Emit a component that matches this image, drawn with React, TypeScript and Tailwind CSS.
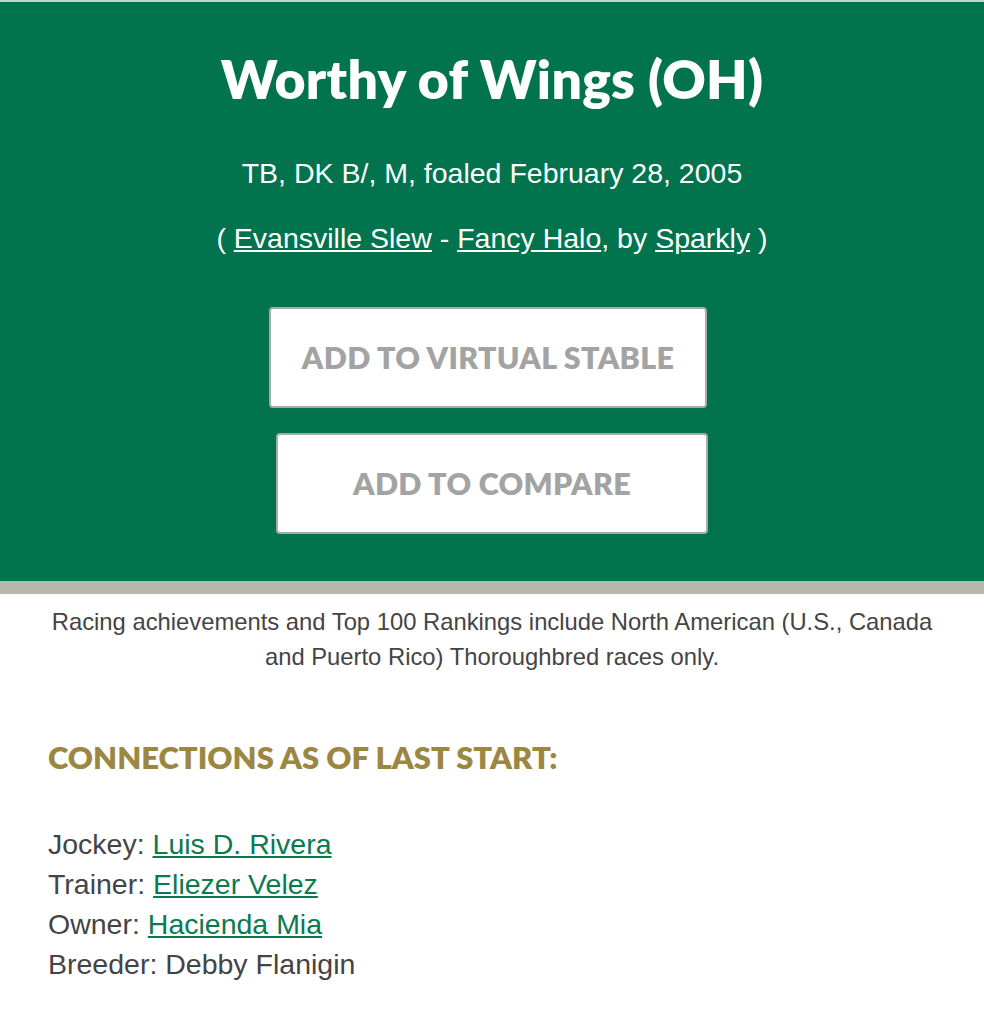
const heading = "font-['Lato','Open_Sans',sans-serif]"
const body = "font-['Liberation_Sans',Arial,sans-serif]"

const connections = [
    { label: 'Jockey:', name: 'Luis D. Rivera', link: true },
    { label: 'Trainer:', name: 'Eliezer Velez', link: true },
    { label: 'Owner:', name: 'Hacienda Mia', link: true },
    { label: 'Breeder:', name: 'Debby Flanigin', link: false },
]

export default function App() {
    return (
        <div className="w-[984px] min-h-[1024px] bg-white border-t-2 border-[#c9cfcb]">
            <section className="bg-[#01734d] text-white pt-[44px] pb-[47px] border-b-[13px] border-[#bab8ae]">
                <h1 className={`${heading} text-center text-[53.5px] leading-[64px] font-extrabold tracking-[0.3px]`}>
                    Worthy of Wings (OH)
                </h1>
                <div className={`${body} text-center text-[28.5px] leading-[32px] mt-[47px]`}>
                    TB, DK B/, M, foaled February 28, 2005
                </div>
                <div className={`${body} text-center text-[28.5px] leading-[32px] mt-[33px]`}>
                    ( <a className="underline">Evansville Slew</a> - <a className="underline">Fancy Halo</a>, by <a className="underline">Sparkly</a> )
                </div>
                <div className="flex flex-col items-start w-[440px] ml-[269px] mt-[53px] gap-[25px]">
                    <button className={`${heading} w-[438px] h-[101px] bg-white border-2 border-[#a9aba9] rounded-[4px] text-[#a3a3a3] text-[30.4px] font-extrabold tracking-[0.3px]`}>
                        ADD TO VIRTUAL STABLE
                    </button>
                    <button className={`${heading} ml-[7px] w-[432px] h-[101px] bg-white border-2 border-[#a9aba9] rounded-[4px] text-[#a3a3a3] text-[30.4px] font-extrabold tracking-[0.3px]`}>
                        ADD TO COMPARE
                    </button>
                </div>
            </section>
            <p className={`${body} text-center text-[23.8px] leading-[35px] text-[#444] mt-[10px]`}>
                Racing achievements and Top 100 Rankings include North American (U.S., Canada<br />
                and Puerto Rico) Thoroughbred races only.
            </p>
            <h2 className={`${heading} text-[#9b8742] text-[31px] font-extrabold ml-[48px] mt-[63px] leading-[40px]`}>
                CONNECTIONS AS OF LAST START:
            </h2>
            <div className={`${body} text-[28.5px] leading-[40px] text-[#444] ml-[48px] mt-[47px]`}>
                {connections.map(c => (
                    <div key={c.label}>
                        {c.label}{' '}
                        {c.link ? <a className="text-[#0b7a4e] underline">{c.name}</a> : c.name}
                    </div>
                ))}
            </div>
        </div>
    )
}
